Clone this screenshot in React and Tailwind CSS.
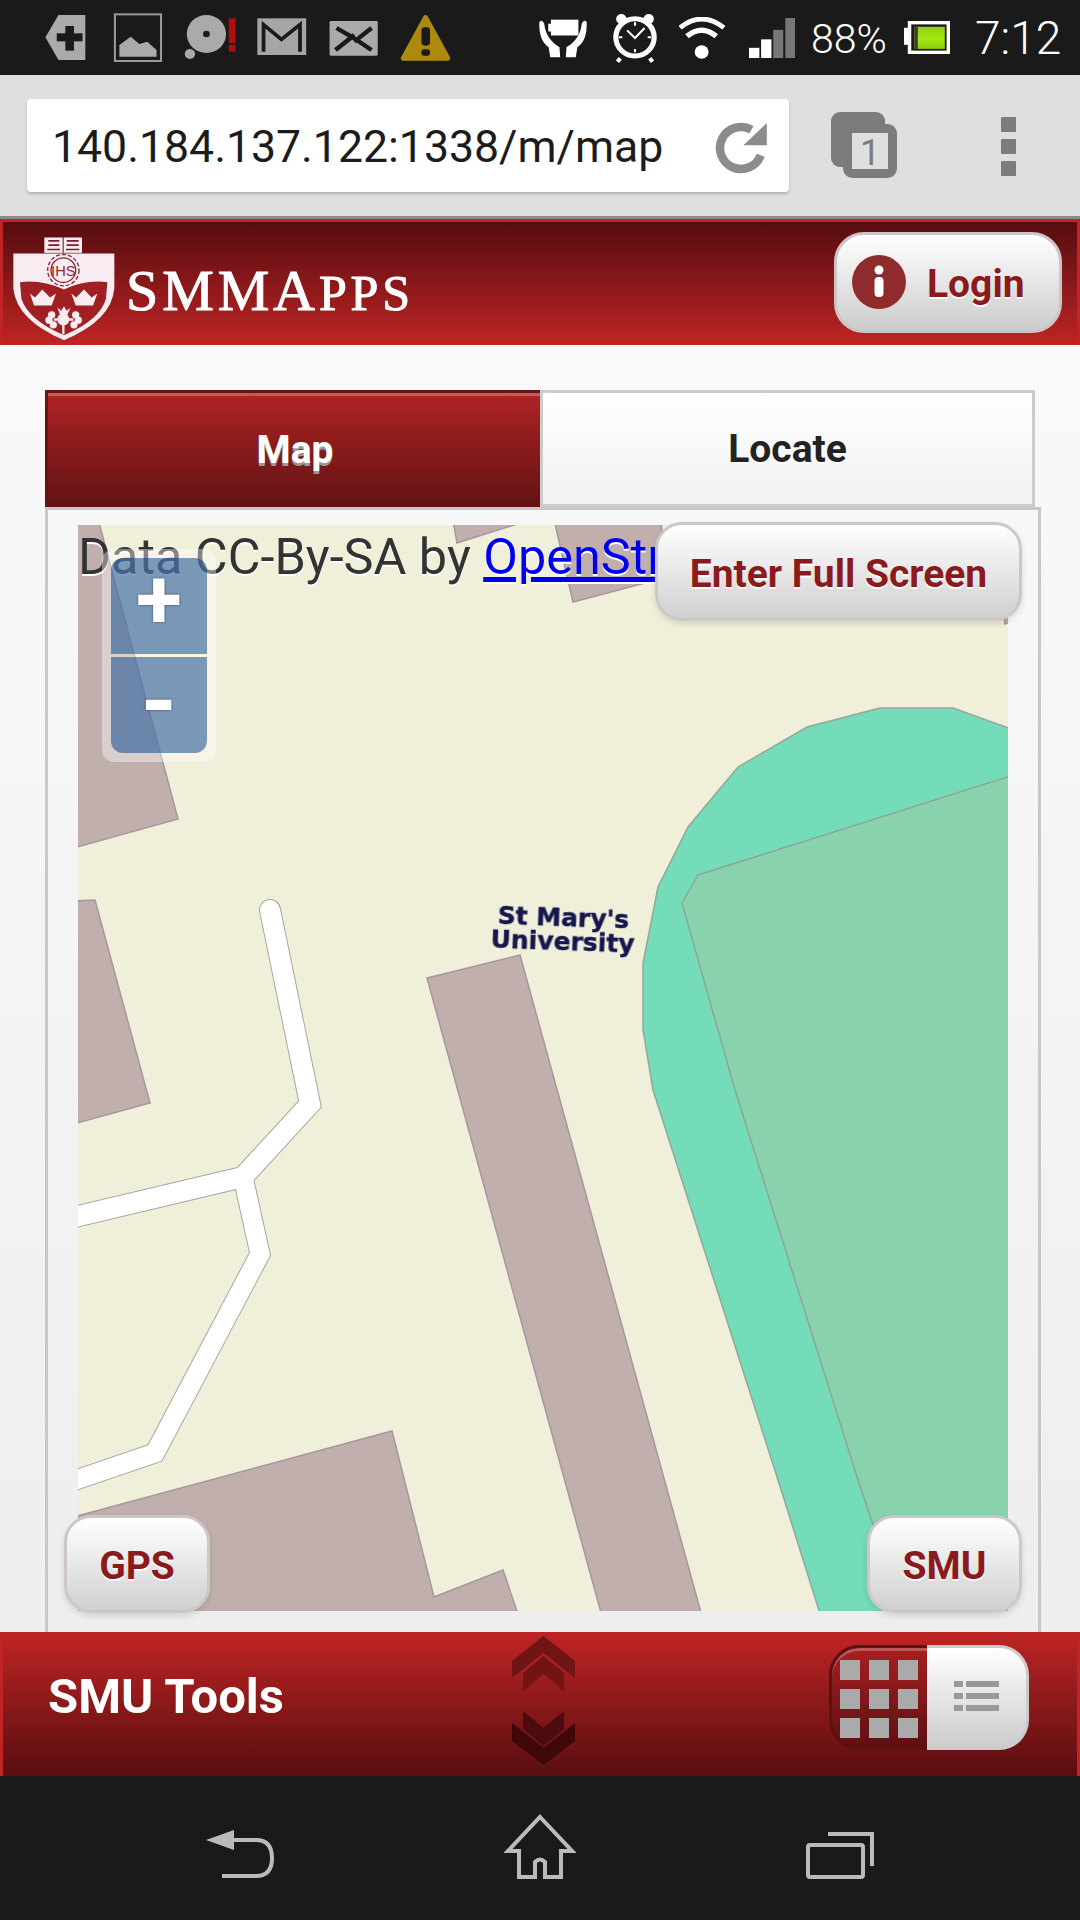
import React from "react";

const ic = "#7c7c7c";

function LeftIcons() {
  return (
    <svg width="461" height="75" viewBox="0 0 1340 225" preserveAspectRatio="none" className="block shrink-0">
      <polygon points="132,112 170,45 248,45 248,180 170,180" fill="#aaa" />
      <rect x="165" y="100" width="75" height="24" fill="#1a1a1a" />
      <rect x="190" y="78" width="25" height="74" fill="#1a1a1a" />
      <rect x="334" y="43" width="134" height="140" fill="none" stroke="#9a9a9a" strokeWidth="6" />
      <path d="M347 170 L347 135 L380 110 L405 132 L428 125 L455 150 L455 170 Z" fill="#aaa" />
      <circle cx="600" cy="102" r="57" fill="#aaa" />
      <circle cx="600" cy="102" r="10" fill="#1a1a1a" />
      <circle cx="552" cy="162" r="15" fill="#aaa" />
      <rect x="665" y="55" width="20" height="75" fill="#b00d0d" />
      <rect x="665" y="135" width="20" height="20" fill="#b00d0d" />
      <rect x="748" y="55" width="142" height="110" fill="#a6a6a6" />
      <path d="M766 155 L766 74 L818 118 L872 74 L872 155" fill="none" stroke="#1a1a1a" strokeWidth="11" />
      <rect x="958" y="63" width="140" height="104" rx="4" fill="#aaa" />
      <path d="M975 150 L1030 105 M1080 150 L1025 112 L978 84 M1080 84 L1030 125" fill="none" stroke="#1a1a1a" strokeWidth="13" />
      <path d="M1237 52 L1172 175 L1302 175 Z" fill="#ad8a0d" stroke="#ad8a0d" strokeWidth="14" strokeLinejoin="round" />
      <rect x="1225" y="82" width="25" height="55" rx="10" fill="#1a1a1a" />
      <rect x="1225" y="148" width="25" height="19" rx="8" fill="#1a1a1a" />
    </svg>
  );
}

function Hands() {
  return (
    <svg width="53" height="42" viewBox="50 35 160 125" preserveAspectRatio="none" className="block shrink-0 ml-[76px]">
      <rect x="92" y="43" width="83" height="47" fill="#fff" />
      <rect x="84" y="55" width="10" height="23" fill="#fff" />
      <path d="M57 50 Q65 40 72 55 Q76 100 118 125 L120 155 L90 155 L85 125 Q55 105 57 50 Z" fill="#fff" />
      <path d="M200 50 Q192 40 185 55 Q181 100 139 125 L137 155 L167 155 L172 125 Q202 105 200 50 Z" fill="#fff" />
    </svg>
  );
}

function Alarm() {
  return (
    <svg width="48" height="50" viewBox="205 40 140 150" preserveAspectRatio="none" className="block shrink-0 ml-[21px]">
      <circle cx="275" cy="113" r="56" fill="none" stroke="#fff" strokeWidth="15" />
      <circle cx="235" cy="58" r="15" fill="#fff" />
      <circle cx="315" cy="58" r="15" fill="#fff" />
      <path d="M232 176 L224 186 M318 176 L326 186" stroke="#fff" strokeWidth="12" />
      <path d="M252 92 L275 115 L303 85" fill="none" stroke="#fff" strokeWidth="6" />
      <path d="M275 68 V78 M275 148 V158 M228 113 H238 M312 113 H322" stroke="#fff" strokeWidth="6" />
    </svg>
  );
}

function Wifi() {
  return (
    <svg width="46" height="42" viewBox="405 48 132 126" preserveAspectRatio="none" className="block shrink-0 ml-[20px]">
      <circle cx="470" cy="153" r="20" fill="#fff" />
      <path d="M428 106 Q470 70 512 106" fill="none" stroke="#fff" strokeWidth="16" />
      <path d="M408 80 Q470 28 534 80" fill="none" stroke="#fff" strokeWidth="14" />
    </svg>
  );
}

function Signal() {
  return (
    <svg width="46" height="40" viewBox="607 55 133 118" preserveAspectRatio="none" className="block shrink-0 ml-[24px]">
      <rect x="607" y="143" width="30" height="30" fill="#fff" />
      <rect x="642" y="118" width="30" height="55" fill="#fff" />
      <rect x="677" y="90" width="29" height="83" fill="#777" />
      <rect x="712" y="55" width="28" height="118" fill="#777" />
    </svg>
  );
}

function Battery() {
  return (
    <svg width="46" height="33" viewBox="1060 65 133 97" preserveAspectRatio="none" className="block shrink-0 ml-[18px]">
      <defs>
        <linearGradient id="bat" x1="0" y1="0" x2="0" y2="1">
          <stop offset="0" stopColor="#8fcf10" />
          <stop offset="0.55" stopColor="#a6e812" />
          <stop offset="1" stopColor="#8ccc0e" />
        </linearGradient>
      </defs>
      <rect x="1060" y="85" width="14" height="50" fill="#fff" />
      <rect x="1076" y="70" width="112" height="87" fill="#1a1a1a" stroke="#fff" strokeWidth="10" />
      <rect x="1090" y="82" width="88" height="65" fill="url(#bat)" />
      <rect x="1090" y="82" width="10" height="65" fill="#3a3a3a" />
    </svg>
  );
}

function Reload() {
  return (
    <svg width="60" height="60" viewBox="-30 -30 60 60" className="block shrink-0 mt-[5px]">
      <path d="M19.7 7.2 A21 21 0 1 1 10.5 -18.2" fill="none" stroke="#8c8c8c" strokeWidth="8.5" />
      <polygon points="25.8,-25 25.8,-2.7 2.4,-2.7" fill="#8c8c8c" />
    </svg>
  );
}

function TabsIcon() {
  return (
    <svg width="66" height="66" viewBox="0 0 66 66" className="block shrink-0 ml-[42px]">
      <rect x="0" y="0" width="54" height="55" rx="9" fill={ic} />
      <rect x="16.5" y="16.5" width="45" height="45" rx="5" fill="#dfdfdf" stroke={ic} strokeWidth="9" />
      <text x="39" y="53" textAnchor="middle" fontSize="36" fontFamily="Roboto, sans-serif" fill={ic}>1</text>
    </svg>
  );
}

function Logo() {
  const w = "#f8ecf2";
  return (
    <svg width="110" height="107" viewBox="30 45 330 320" className="block shrink-0 ml-[7px] mt-[10px]">
      <rect x="133" y="52" width="55" height="46" fill={w} />
      <rect x="191" y="52" width="55" height="46" fill={w} />
      <path d="M145 62 H178 M145 75 H178 M200 62 H236 M200 75 H236 M142 88 H180 M198 88 H238" stroke="#7a2226" strokeWidth="5" />
      <path d="M40 100 L343 100 L343 205 Q335 300 192 360 Q50 300 40 205 Z" fill={w} />
      <path d="M60 186 Q125 178 192 208 Q255 178 322 186 L318 235 Q300 300 192 345 Q85 300 64 235 Z" fill="#a01f22" />
      <circle cx="190" cy="150" r="37" fill="none" stroke="#8a2a30" strokeWidth="4" />
      <circle cx="190" cy="150" r="47" fill="none" stroke="#8a2a30" strokeWidth="4" strokeDasharray="12 6" />
      <text x="190" y="167" textAnchor="middle" fontSize="44" fontFamily="Liberation Sans, sans-serif" fill="#8a2a30">IHS</text>
      <path d="M90 220 L105 232 L127 208 L150 232 L168 220 L155 256 L102 256 Z" fill={w} />
      <path d="M214 220 L229 232 L252 208 L275 232 L292 220 L279 256 L227 256 Z" fill={w} />
      <path d="M172 262 L180 284 L202 284 L212 262 L200 272 L192 258 L184 272 Z" fill={w} />
      <circle cx="190" cy="298" r="18" fill={w} />
      <g fill={w}>
        <circle cx="155" cy="284" r="11" />
        <circle cx="147" cy="300" r="11" />
        <circle cx="160" cy="314" r="11" />
        <circle cx="227" cy="284" r="11" />
        <circle cx="235" cy="300" r="11" />
        <circle cx="222" cy="314" r="11" />
      </g>
      <path d="M162 298 H220 M190 312 V342" stroke={w} strokeWidth="7" />
    </svg>
  );
}

function MapArt() {
  const bld = "#c0afac";
  const edge = "#a596a4";
  return (
    <svg viewBox="78 525 930 1086" className="block w-full h-full">
      <rect x="78" y="525" width="930" height="1086" fill="#f0efd9" />
      <g fill={bld} stroke={edge} strokeWidth="1.5">
        <polygon points="70,515 97,515 178,819 70,849" />
        <polygon points="70,901 95,900 150,1103 70,1125" />
        <polygon points="427,978 520,955 703,1620 603,1620" />
        <polygon points="70,1518 392,1431 434,1597 503,1570 520,1620 70,1620" />
        <polygon points="452,515 457,543 530,520 520,515" />
        <polygon points="553,515 573,602 668,577 660,515" />
        <polygon points="1005,624 1012,621 1012,612 1003,612" />
      </g>
      <g fill="none" strokeLinejoin="miter" strokeLinecap="round">
        <path d="M270 910 L310 1104 L243 1177 L70 1218" stroke="#a7a7a2" strokeWidth="22" />
        <path d="M243 1177 L260 1254 L155 1453 L70 1482" stroke="#a7a7a2" strokeWidth="21" />
        <path d="M270 910 L310 1104 L243 1177 L70 1218" stroke="#ffffff" strokeWidth="20" />
        <path d="M243 1177 L260 1254 L155 1453 L70 1482" stroke="#ffffff" strokeWidth="19" />
      </g>
      <polygon
        points="1020,732 953,708 880,708 807,727 738,767 688,827 658,887 643,963 643,1030 653,1090 778,1480 822,1620 1020,1620"
        fill="#74dcb9"
        stroke="#92a89c"
        strokeWidth="1.5"
      />
      <polygon
        points="1020,773 698,875 682,903 735,1090 858,1480 905,1620 1020,1620"
        fill="#88d2ae"
        stroke="#8fa596"
        strokeWidth="1.5"
      />
    </svg>
  );
}

const Btn = ({ className, children }) => (
  <button className={
    "absolute flex items-center justify-center pt-[5px] bg-linear-to-b from-white to-[#d0d0d0] border-[3px] border-[#cdc7c8] rounded-[27px] shadow-[0_3px_6px_rgba(0,0,0,0.12)] font-bold text-[39px] leading-none text-[#8a1a1c] [text-shadow:0_2px_0_#fff] " +
    className
  }>
    {children}
  </button>
);

export default function App() {
  return (
    <div className="w-[1080px] h-[1920px] flex flex-col overflow-hidden [font-family:Roboto,sans-serif]">
      {/* status bar */}
      <div className="h-[75px] shrink-0 bg-[#1a1a1a] flex items-center">
        <LeftIcons />
        <Hands />
        <Alarm />
        <Wifi />
        <Signal />
        <span className="ml-[16px] mt-[3px] w-[75px] text-[41px] font-light text-white leading-none whitespace-nowrap">88%</span>
        <Battery />
        <span className="ml-[25px] mt-[1px] text-[46px] font-light text-white leading-none whitespace-nowrap">7:12</span>
      </div>

      {/* browser bar */}
      <div className="h-[144px] shrink-0 bg-[#dfdfdf] border-b-[3px] border-[#8a8a8a] flex items-center pb-[1px] pl-[27px]">
        <div className="w-[762px] h-[93px] bg-white rounded-[4px] shadow-[0_2px_3px_rgba(0,0,0,0.2)] flex items-center justify-between pl-[25px] pr-[18px]">
          <span className="mt-[5px] text-[44.6px] leading-none text-[#1c1c1c] whitespace-nowrap">140.184.137.122:1338/m/map</span>
          <Reload />
        </div>
        <TabsIcon />
        <div className="ml-[104px] mt-[2px] flex flex-col gap-[7px]">
          <div className="w-[15px] h-[15px] bg-[#7c7c7c] rounded-[1px]" />
          <div className="w-[15px] h-[15px] bg-[#7c7c7c] rounded-[1px]" />
          <div className="w-[15px] h-[15px] bg-[#7c7c7c] rounded-[1px]" />
        </div>
      </div>

      {/* header */}
      <div className="h-[126px] shrink-0 border-[3px] border-b-0 border-[#c02424] bg-linear-to-b from-[#560d10] to-[#c02424] flex items-center justify-between">
        <div className="flex items-center">
          <Logo />
          <div className="ml-[6px] mt-[15px] text-[#fff] [font-family:'Liberation_Serif',serif] tracking-[3.9px] [-webkit-text-stroke:1px_#fff] leading-none whitespace-nowrap">
            <span className="text-[58px]">SMMA</span>
            <span className="text-[50px]">PPS</span>
          </div>
        </div>
        <button className="w-[228px] h-[101px] mr-[15px] mb-[3px] rounded-[30px] border-[3px] border-[#cfc4c5] bg-linear-to-b from-white to-[#cccccc] flex items-center pl-[15px]">
          <svg width="54" height="54" viewBox="0 0 54 54" className="block shrink-0">
            <circle cx="27" cy="27" r="27" fill="#8f2a2d" />
            <circle cx="27" cy="15" r="4.5" fill="#fff" />
            <rect x="22.5" y="22" width="9" height="20" rx="4" fill="#fff" />
          </svg>
          <span className="ml-[21px] pt-[4px] text-[39px] font-bold leading-none text-[#8a1a1c] [text-shadow:0_2px_0_#fff]">Login</span>
        </button>
      </div>

      {/* main */}
      <div className="flex-1 min-h-0 flex flex-col pt-[45px] pl-[45px] pr-[39px] bg-linear-to-b from-[#f9f9f9] to-[#eeeeee]">
        <div className="h-[117px] shrink-0 flex">
          <div className="w-[495px] pl-[2px] border-[3px] border-b-0 border-r-0 border-[#651416] bg-linear-to-b from-[#b02323] to-[#621214] shadow-[inset_0_3px_0_rgba(255,255,255,0.25)] flex items-center justify-center text-[39px] font-bold text-white [text-shadow:0_3px_0_#999]">
            Map
          </div>
          <div className="w-[495px] pt-[2px] border-[3px] border-[#cccccc] bg-linear-to-b from-white to-[#f1f1f1] flex items-center justify-center text-[39px] font-bold text-[#222] [text-shadow:0_2px_0_#fff]">
            Locate
          </div>
        </div>
        <div className="relative flex-1 min-h-0 border-[3px] border-b-0 border-[#c8c8c8] pt-[15px] pb-[21px] px-[30px]">
          <div className="relative w-full h-full overflow-hidden">
            <MapArt />
            <div className="absolute left-[0px] top-[6px] w-[700px] text-[50.4px] leading-[52px] text-[#333] whitespace-nowrap [text-shadow:0_2px_0_#fff]">
              Data CC-By-SA by <a className="text-[#0000ee] underline">OpenStreetMap</a>
            </div>
            <div className="absolute left-[24px] top-[24px] w-[114px] h-[213px] rounded-[12px] bg-white/40 p-[9px]">
              <div className="flex flex-col gap-[3px] h-[195px] text-white font-bold [text-shadow:0_0_3px_rgba(0,0,0,0.5)]">
                <div className="h-[96px] rounded-t-[12px] bg-[#003c88]/50 flex items-center justify-center text-[84px] leading-none pb-[12px]">+</div>
                <div className="h-[96px] rounded-b-[12px] bg-[#003c88]/50 flex items-center justify-center text-[92px] leading-none pb-[6px]">-</div>
              </div>
            </div>
            <div className="absolute left-[413px] top-[381px] rotate-[2deg] blur-[0.7px] text-[25px] leading-[24px] font-bold text-center text-[#16164f] [font-family:'DejaVu_Sans',sans-serif] [-webkit-text-stroke:0.5px_#16164f] whitespace-nowrap">
              St Mary's<br />University
            </div>
          </div>
          <Btn className="right-[16px] top-[12px] w-[367px] h-[99px]">Enter Full Screen</Btn>
          <Btn className="left-[16px] bottom-[19px] w-[146px] h-[98px]">GPS</Btn>
          <Btn className="right-[16px] bottom-[19px] w-[155px] h-[98px]">SMU</Btn>
        </div>
      </div>

      {/* footer */}
      <div className="h-[144px] shrink-0 border-x-[3px] border-[#c02424] bg-linear-to-b from-[#c02424] to-[#5a0e10] flex items-center">
        <span className="ml-[45px] w-[241px] mb-[16px] text-[49px] font-bold leading-none text-white whitespace-nowrap">SMU Tools</span>
        <svg width="64" height="132" viewBox="512 1634 64 132" className="block shrink-0 ml-[223px] mb-[6px]">
          <polygon points="543.5,1635 575,1660 575,1677 543.5,1652 512,1677 512,1660" fill="#701416" />
          <polygon points="543.5,1655 564,1672 564,1690 543.5,1673 523,1690 523,1672" fill="#701416" />
          <polygon points="543.5,1745 564,1728 564,1710 543.5,1727 523,1710 523,1728" fill="#4c0b0c" />
          <polygon points="543.5,1764 575,1740 575,1722 543.5,1747 512,1722 512,1740" fill="#3f0809" />
        </svg>
        <div className="ml-[253px] mb-[14px] w-[200px] h-[105px] flex">
          <div className="w-[98px] h-full rounded-l-[30px] border-[3px] border-r-0 border-[#5e1012] bg-linear-to-b from-[#a81f20] to-[#5e1012] shadow-[inset_0_3px_0_rgba(255,255,255,0.25)] pl-[8px] pt-[12px]">
            <div className="grid grid-cols-3 gap-[9px] w-[78px]">
              {[0, 1, 2, 3, 4, 5, 6, 7, 8].map((i) => (
                <div key={i} className="w-[20px] h-[20px] bg-[#aaaaaa]" />
              ))}
            </div>
          </div>
          <div className="w-[102px] h-full rounded-r-[30px] border-[3px] border-l-0 border-[#cccccc] bg-linear-to-b from-white to-[#cccccc] pl-[27px] pt-[33px]">
            <div className="flex flex-col gap-[6px]">
              {[0, 1, 2].map((i) => (
                <div key={i} className="flex gap-[3px]">
                  <div className="w-[9px] h-[6px] bg-[#999]" />
                  <div className="w-[33px] h-[6px] bg-[#999]" />
                </div>
              ))}
            </div>
          </div>
        </div>
      </div>

      {/* nav */}
      <div className="h-[144px] shrink-0 bg-[#1a1a1a] flex items-start pt-[38px]">
        <svg width="72" height="52" viewBox="204 1828 72 52" className="block shrink-0 ml-[204px] mt-[14px]">
          <polygon points="206,1840 234,1830 234,1850" fill="#bbb" />
          <path d="M232 1840 H256 Q272 1840 272 1858 Q272 1876 256 1876 H222" fill="none" stroke="#bbb" strokeWidth="4" />
        </svg>
        <svg width="72" height="66" viewBox="504 1814 72 66" className="block shrink-0 ml-[228px]">
          <path d="M540 1817 L572 1851 L561 1851 L561 1877 L545 1877 L545 1862 Q540 1857 535 1862 L535 1877 L519 1877 L519 1851 L508 1851 Z" fill="none" stroke="#bbb" strokeWidth="4" strokeLinejoin="miter" />
        </svg>
        <svg width="71" height="50" viewBox="804 1830 71 50" className="block shrink-0 ml-[228px] mt-[16px]">
          <rect x="808" y="1845" width="55" height="32" rx="2" fill="none" stroke="#bbb" strokeWidth="4" />
          <path d="M828 1834 H872 V1866" fill="none" stroke="#bbb" strokeWidth="4" />
        </svg>
      </div>
    </div>
  );
}
